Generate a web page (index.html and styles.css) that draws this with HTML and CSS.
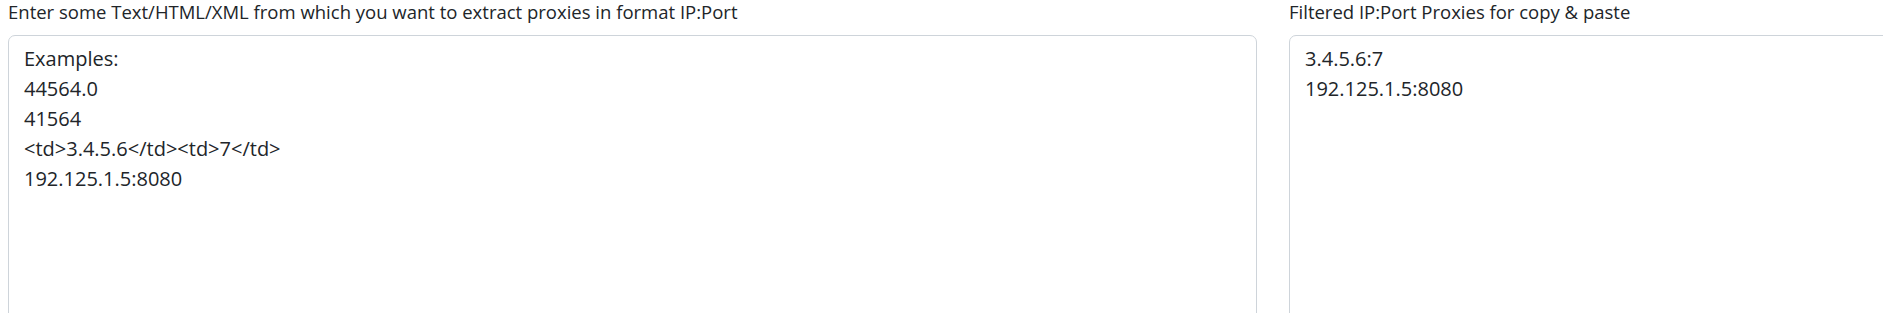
FILE: index.html
```html
<!DOCTYPE html>
<html lang="en">
<head>
    <meta charset="UTF-8">
    <meta name="viewport" content="width=device-width, initial-scale=1.0">
    <title>Proxy Extractor</title>
    <link rel="stylesheet" href="styles.css">
</head>
<body>
    <div class="extractor">
        <div class="extractor-col">
            <label for="source" class="extractor-label">Enter some Text/HTML/XML from which you want to extract proxies in format IP:Port</label>
            <textarea id="source" class="extractor-box">Examples:
44564.0
41564
&lt;td&gt;3.4.5.6&lt;/td&gt;&lt;td&gt;7&lt;/td&gt;
192.125.1.5:8080</textarea>
        </div>
        <div class="extractor-col">
            <label for="result" class="extractor-label">Filtered IP:Port Proxies for copy &amp; paste</label>
            <textarea id="result" class="extractor-box" readonly>3.4.5.6:7
192.125.1.5:8080</textarea>
        </div>
    </div>
</body>
</html>
```

FILE: styles.css
```css
*{
    margin: 0px;
    padding: 0px;
    box-sizing: border-box;
}
html,
body{
    overflow: hidden;
}
body{
    background-color: #fff;
    color: #212529;
    font-family: "Open Sans", "Noto Sans", sans-serif;
}
.extractor{
    display: grid;
    grid-template-columns: 1249px 1249px;
    column-gap: 32px;
    padding-left: 8px;
}
.extractor-col{
    display: flex;
    flex-direction: column;
}
.extractor-label{
    display: block;
    height: 35px;
    font-size: 18.5px;
    line-height: 24px;
}
.extractor-box{
    display: block;
    width: 100%;
    height: 400px;
    padding: 8px 15px;
    border: 1px solid #ced4da;
    border-radius: 7px;
    background-color: #fff;
    color: #212529;
    font-family: "Open Sans", "Noto Sans", sans-serif;
    font-size: 20px;
    line-height: 30px;
    resize: none;
    outline: none;
}
```
